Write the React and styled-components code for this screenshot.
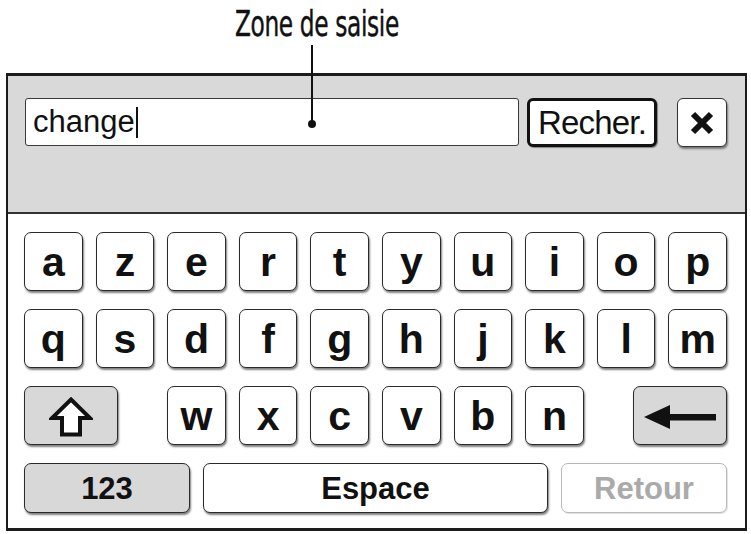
import React from "react";
import styled, { createGlobalStyle } from "styled-components";

const GlobalStyle = createGlobalStyle`
  html, body {
    margin: 0;
    padding: 0;
    background: #ffffff;
  }
  body {
    font-family: "Liberation Sans", Arial, sans-serif;
    color: #111111;
  }
`;

const Page = styled.div`
  position: relative;
  width: 751px;
  height: 534px;
  overflow: hidden;
`;

const TitleBar = styled.div`
  height: 73px;
  padding-left: 235px;
  box-sizing: border-box;
`;

const Title = styled.div`
  display: inline-block;
  font-family: "Liberation Sans Narrow", "DejaVu Sans Condensed", "Liberation Sans", sans-serif;
  font-size: 35px;
  line-height: 44px;
  letter-spacing: -0.5px;
  color: #111111;
  padding-top: 2px;
  transform: scaleX(0.74);
  transform-origin: left center;
  -webkit-text-stroke: 0.4px #111111;
`;

const Callout = styled.div`
  position: absolute;
  left: 311px;
  top: 45px;
  width: 2px;
  height: 80px;
  background: #111111;
  z-index: 2;

  &::after {
    content: "";
    position: absolute;
    left: -3px;
    bottom: -3px;
    width: 8px;
    height: 8px;
    border-radius: 50%;
    background: #111111;
  }
`;

const Frame = styled.div`
  margin-left: 6px;
  width: 741px;
  height: 458px;
  box-sizing: border-box;
  border: 2px solid #1c1c1c;
  border-top-width: 3px;
  border-bottom-width: 3px;
  display: flex;
  flex-direction: column;
`;

const SearchPanel = styled.div`
  height: 138px;
  box-sizing: border-box;
  background: #d9d9d9;
  border-bottom: 2px solid #333333;
  padding: 22px 0 0 17px;
  display: flex;
  align-items: flex-start;
`;

const Field = styled.div`
  width: 494px;
  height: 48px;
  box-sizing: border-box;
  background: #ffffff;
  border: 1.5px solid #3a3a3a;
  border-radius: 3px;
  padding-left: 7px;
  display: flex;
  align-items: center;
  font-size: 31px;
  color: #111111;
`;

const Caret = styled.span`
  display: inline-block;
  width: 2px;
  height: 31px;
  background: #111111;
  margin-left: 1px;
`;

const SearchButton = styled.div`
  margin-left: 8px;
  width: 130px;
  height: 49px;
  box-sizing: border-box;
  background: #ffffff;
  border: 3px solid #111111;
  border-radius: 6px;
  box-shadow: 1px 1px 1px rgba(0, 0, 0, 0.4);
  display: flex;
  align-items: center;
  justify-content: center;
  font-size: 33px;
  letter-spacing: -0.8px;
  color: #111111;
`;

const CloseButton = styled.div`
  margin-left: 20px;
  width: 50px;
  height: 49px;
  box-sizing: border-box;
  background: #ffffff;
  border: 1.5px solid #333333;
  border-radius: 6px;
  box-shadow: 1px 2px 2px rgba(0, 0, 0, 0.45);
  display: flex;
  align-items: center;
  justify-content: center;
`;

const Keyboard = styled.div`
  flex: 1;
  background: #ffffff;
  padding: 18px 18px 0 16px;
  display: grid;
  grid-template-columns: repeat(10, 1fr);
  grid-template-rows: 59px 59px 59px 50px;
  column-gap: 13px;
  row-gap: 18px;
  align-content: start;
`;

const Key = styled.div`
  box-sizing: border-box;
  background: ${(p) => (p.$gray ? "#d8d8d8" : "#ffffff")};
  border: 1.5px solid ${(p) => (p.$disabled ? "#b8b8b8" : "#2a2a2a")};
  border-radius: 7px;
  box-shadow: ${(p) =>
    p.$disabled
      ? "1px 1px 1px rgba(0, 0, 0, 0.12)"
      : "1px 2px 2px rgba(0, 0, 0, 0.5)"};
  display: flex;
  align-items: center;
  justify-content: center;
  font-size: ${(p) => (p.$wide ? "31px" : "41px")};
  font-weight: bold;
  line-height: 1;
  color: ${(p) => (p.$disabled ? "#aaaaaa" : "#111111")};
  padding-top: ${(p) => (p.$wide ? "0" : "2px")};
  ${(p) => (p.$span ? `grid-column: ${p.$span};` : "")}
  ${(p) => (p.$width ? `width: ${p.$width}px;` : "")}
  ${(p) => (p.$align ? `justify-self: ${p.$align};` : "")}
`;

const BottomRow = styled.div`
  grid-column: 1 / -1;
  display: grid;
  grid-template-columns: 166px 1fr 166px;
  column-gap: 13px;
`;

function CloseIcon() {
  return (
    <svg width="24" height="24" viewBox="0 0 24 24">
      <path
        d="M3 3 L21 21 M21 3 L3 21"
        stroke="#111"
        strokeWidth="6"
        strokeLinecap="butt"
      />
    </svg>
  );
}

function ShiftIcon() {
  return (
    <svg width="44" height="40" viewBox="0 0 44 40">
      <path
        d="M22 2.5 L41 21 L31 21 L31 37.5 L13 37.5 L13 21 L3 21 Z"
        fill="#ffffff"
        stroke="#111"
        strokeWidth="4"
        strokeLinejoin="miter"
      />
    </svg>
  );
}

function BackIcon() {
  return (
    <svg width="72" height="26" viewBox="0 0 72 26">
      <path d="M0 13 L26 1 L26 25 Z" fill="#111" />
      <rect x="22" y="10" width="50" height="6.5" fill="#111" />
    </svg>
  );
}

const topRow = ["a", "z", "e", "r", "t", "y", "u", "i", "o", "p"];
const midRow = ["q", "s", "d", "f", "g", "h", "j", "k", "l", "m"];
const lowRow = ["w", "x", "c", "v", "b", "n"];

export default function App() {
  return (
    <Page>
      <GlobalStyle />
      <TitleBar>
        <Title>Zone de saisie</Title>
      </TitleBar>
      <Callout />
      <Frame>
        <SearchPanel>
          <Field>
            change
            <Caret />
          </Field>
          <SearchButton>Recher.</SearchButton>
          <CloseButton>
            <CloseIcon />
          </CloseButton>
        </SearchPanel>
        <Keyboard>
          {topRow.map((k) => (
            <Key key={k}>{k}</Key>
          ))}
          {midRow.map((k) => (
            <Key key={k}>{k}</Key>
          ))}
          <Key $gray $span="1 / 3" $width={94} $align="start">
            <ShiftIcon />
          </Key>
          {lowRow.map((k, i) => (
            <Key key={k} $span={`${i + 3}`}>
              {k}
            </Key>
          ))}
          <Key $gray $span="9 / 11" $width={94} $align="end">
            <BackIcon />
          </Key>
          <BottomRow>
            <Key $gray $wide>
              123
            </Key>
            <Key $wide>Espace</Key>
            <Key $wide $disabled>
              Retour
            </Key>
          </BottomRow>
        </Keyboard>
      </Frame>
    </Page>
  );
}
